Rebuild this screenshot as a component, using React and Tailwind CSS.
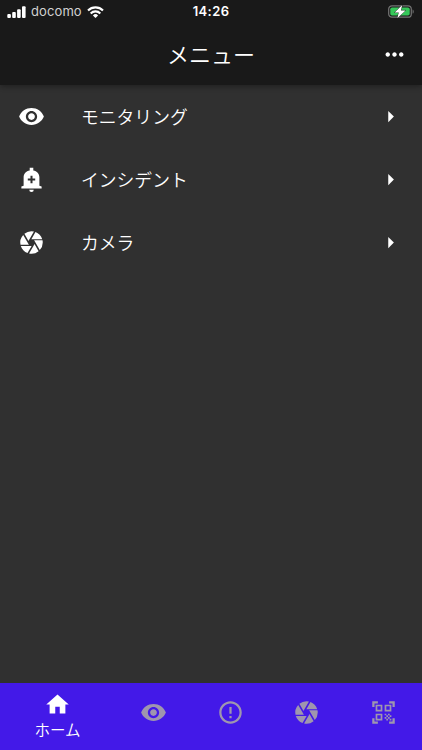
/* eslint-disable react/prop-types */
import { useState } from "react";
import {
  MdArrowRight,
  MdCamera,
  MdErrorOutline,
  MdHome,
  MdMoreHoriz,
  MdQrCodeScanner,
  MdRemoveRedEye,
} from "react-icons/md";

const BellPlus = ({ className }) => (
  <svg viewBox="0 0 24 24" className={className} fill="currentColor">
    <path d="M10 21.200h4a2 2 0 0 1-4 0zM19 17.500V10c0-3-2.200-5.500-5.400-5.900V1.500h-3.200v2.600C7.200 4.500 5 7 5 10v7.500l-2 .7V20h18v-1.800zM15.300 12.900h-2.400v2.400h-1.800v-2.400H8.700v-1.800h2.400V8.700h1.800v2.400h2.400z" />
  </svg>
);

const menuItems = [
  { label: "モニタリング", Icon: MdRemoveRedEye },
  { label: "インシデント", Icon: BellPlus },
  { label: "カメラ", Icon: MdCamera },
];

const tabs = [
  { label: "ホーム", Icon: MdHome },
  { label: "モニタリング", Icon: MdRemoveRedEye },
  { label: "インシデント", Icon: MdErrorOutline },
  { label: "カメラ", Icon: MdCamera },
  { label: "QRコード", Icon: MdQrCodeScanner },
];

const App = () => {
  const [activeTab, setActiveTab] = useState(0);

  return (
    <div className="flex h-[750px] w-[422px] flex-col overflow-hidden bg-[#303030] font-['Noto_Sans_CJK_JP',sans-serif] font-[350] text-white">
      <header className="z-10 h-[85px] shrink-0 bg-[#191919] shadow-[0_2px_5px_rgba(0,0,0,0.3)]">
        <StatusBar />
        <div className="grid h-[62px] grid-cols-[56px_1fr_56px] items-center">
          <h1 className="col-start-2 pb-0.5 text-center text-[22px] leading-none font-[350]">
            メニュー
          </h1>
          <button type="button" className="flex justify-center">
            <MdMoreHoriz className="size-[27px]" />
          </button>
        </div>
      </header>

      <main className="flex-1">
        {menuItems.map((item) => (
          <MenuRow key={item.label} {...item} />
        ))}
      </main>

      <nav className="flex h-[67px] shrink-0 bg-[#4319e8]">
        {tabs.map((tab, index) => (
          <TabButton
            key={tab.label}
            {...tab}
            active={activeTab === index}
            onClick={() => setActiveTab(index)}
          />
        ))}
      </nav>
    </div>
  );
};

const StatusBar = () => (
  <div className="grid h-[23px] grid-cols-3 items-center px-[7px]">
    <div className="flex items-center">
      <svg viewBox="0 0 19 12" className="h-3 w-[19px]" fill="currentColor">
        <rect x="0.3" y="8" width="3.6" height="4" rx="1" />
        <rect x="5.2" y="6" width="3.6" height="6" rx="1" />
        <rect x="10.1" y="3.3" width="3.6" height="8.7" rx="1" />
        <rect x="15" y="0.3" width="3.6" height="11.7" rx="1" />
      </svg>
      <span className="ml-[5px] font-['Inter',sans-serif] text-[13px] leading-none font-normal tracking-[0.1px] text-[#d2d2d2]">
        docomo
      </span>
      <svg viewBox="0 0 17 12" className="ml-[5px] h-3 w-[17px]">
        <g fill="none" stroke="currentColor" strokeWidth="2.1">
          <path d="M1 4.5a10.6 10.6 0 0 1 15 0" />
          <path d="M3.7 7.4a6.8 6.8 0 0 1 9.6 0" />
        </g>
        <path d="M8.5 12 5.9 9.4a3.7 3.7 0 0 1 5.2 0z" fill="currentColor" />
      </svg>
    </div>
    <span className="text-center font-['Inter',sans-serif] text-[13px] leading-none font-semibold tracking-[0.4px]">
      14:26
    </span>
    {/* Battery, charging */}
    <svg viewBox="0 0 28 14" className="h-3.5 w-7 justify-self-end">
      <rect
        x="1.7"
        y="0.8"
        width="22.6"
        height="11.4"
        rx="3.3"
        fill="none"
        stroke="#747474"
        strokeWidth="1.2"
      />
      <rect x="3.3" y="2.4" width="19.4" height="8.2" rx="1.8" fill="#35c759" />
      <path d="M25.6 4.4c1.5.5 1.5 3.7 0 4.2z" fill="#747474" />
      <path
        d="M15.2 0 7.6 7.4h4.2l-1.5 5.8L18.600 5.400h-4.700z"
        fill="#fff"
        stroke="#191919"
        strokeWidth="0.8"
        paintOrder="stroke"
      />
    </svg>
  </div>
);

const MenuRow = ({ label, Icon }) => (
  <button
    type="button"
    className="flex h-[63px] w-full items-center pr-[18px] pl-[18px] text-left"
  >
    <Icon className="size-[27px] shrink-0" />
    <span className="ml-9 flex-1 text-[17.8px] leading-none">{label}</span>
    <MdArrowRight className="size-[27px] shrink-0" />
  </button>
);

const TabButton = ({ label, Icon, active, onClick }) => (
  <button
    type="button"
    aria-label={label}
    onClick={onClick}
    className={`flex min-w-0 flex-col items-center ${
      active
        ? "flex-[1.5] pt-2 text-white"
        : "flex-1 justify-center pb-2 text-[#9f96ae]"
    }`}
  >
    <Icon className="size-[27px] shrink-0" />
    {active && (
      <span className="mt-1 text-[15.5px] leading-none">{label}</span>
    )}
  </button>
);

export default App;
